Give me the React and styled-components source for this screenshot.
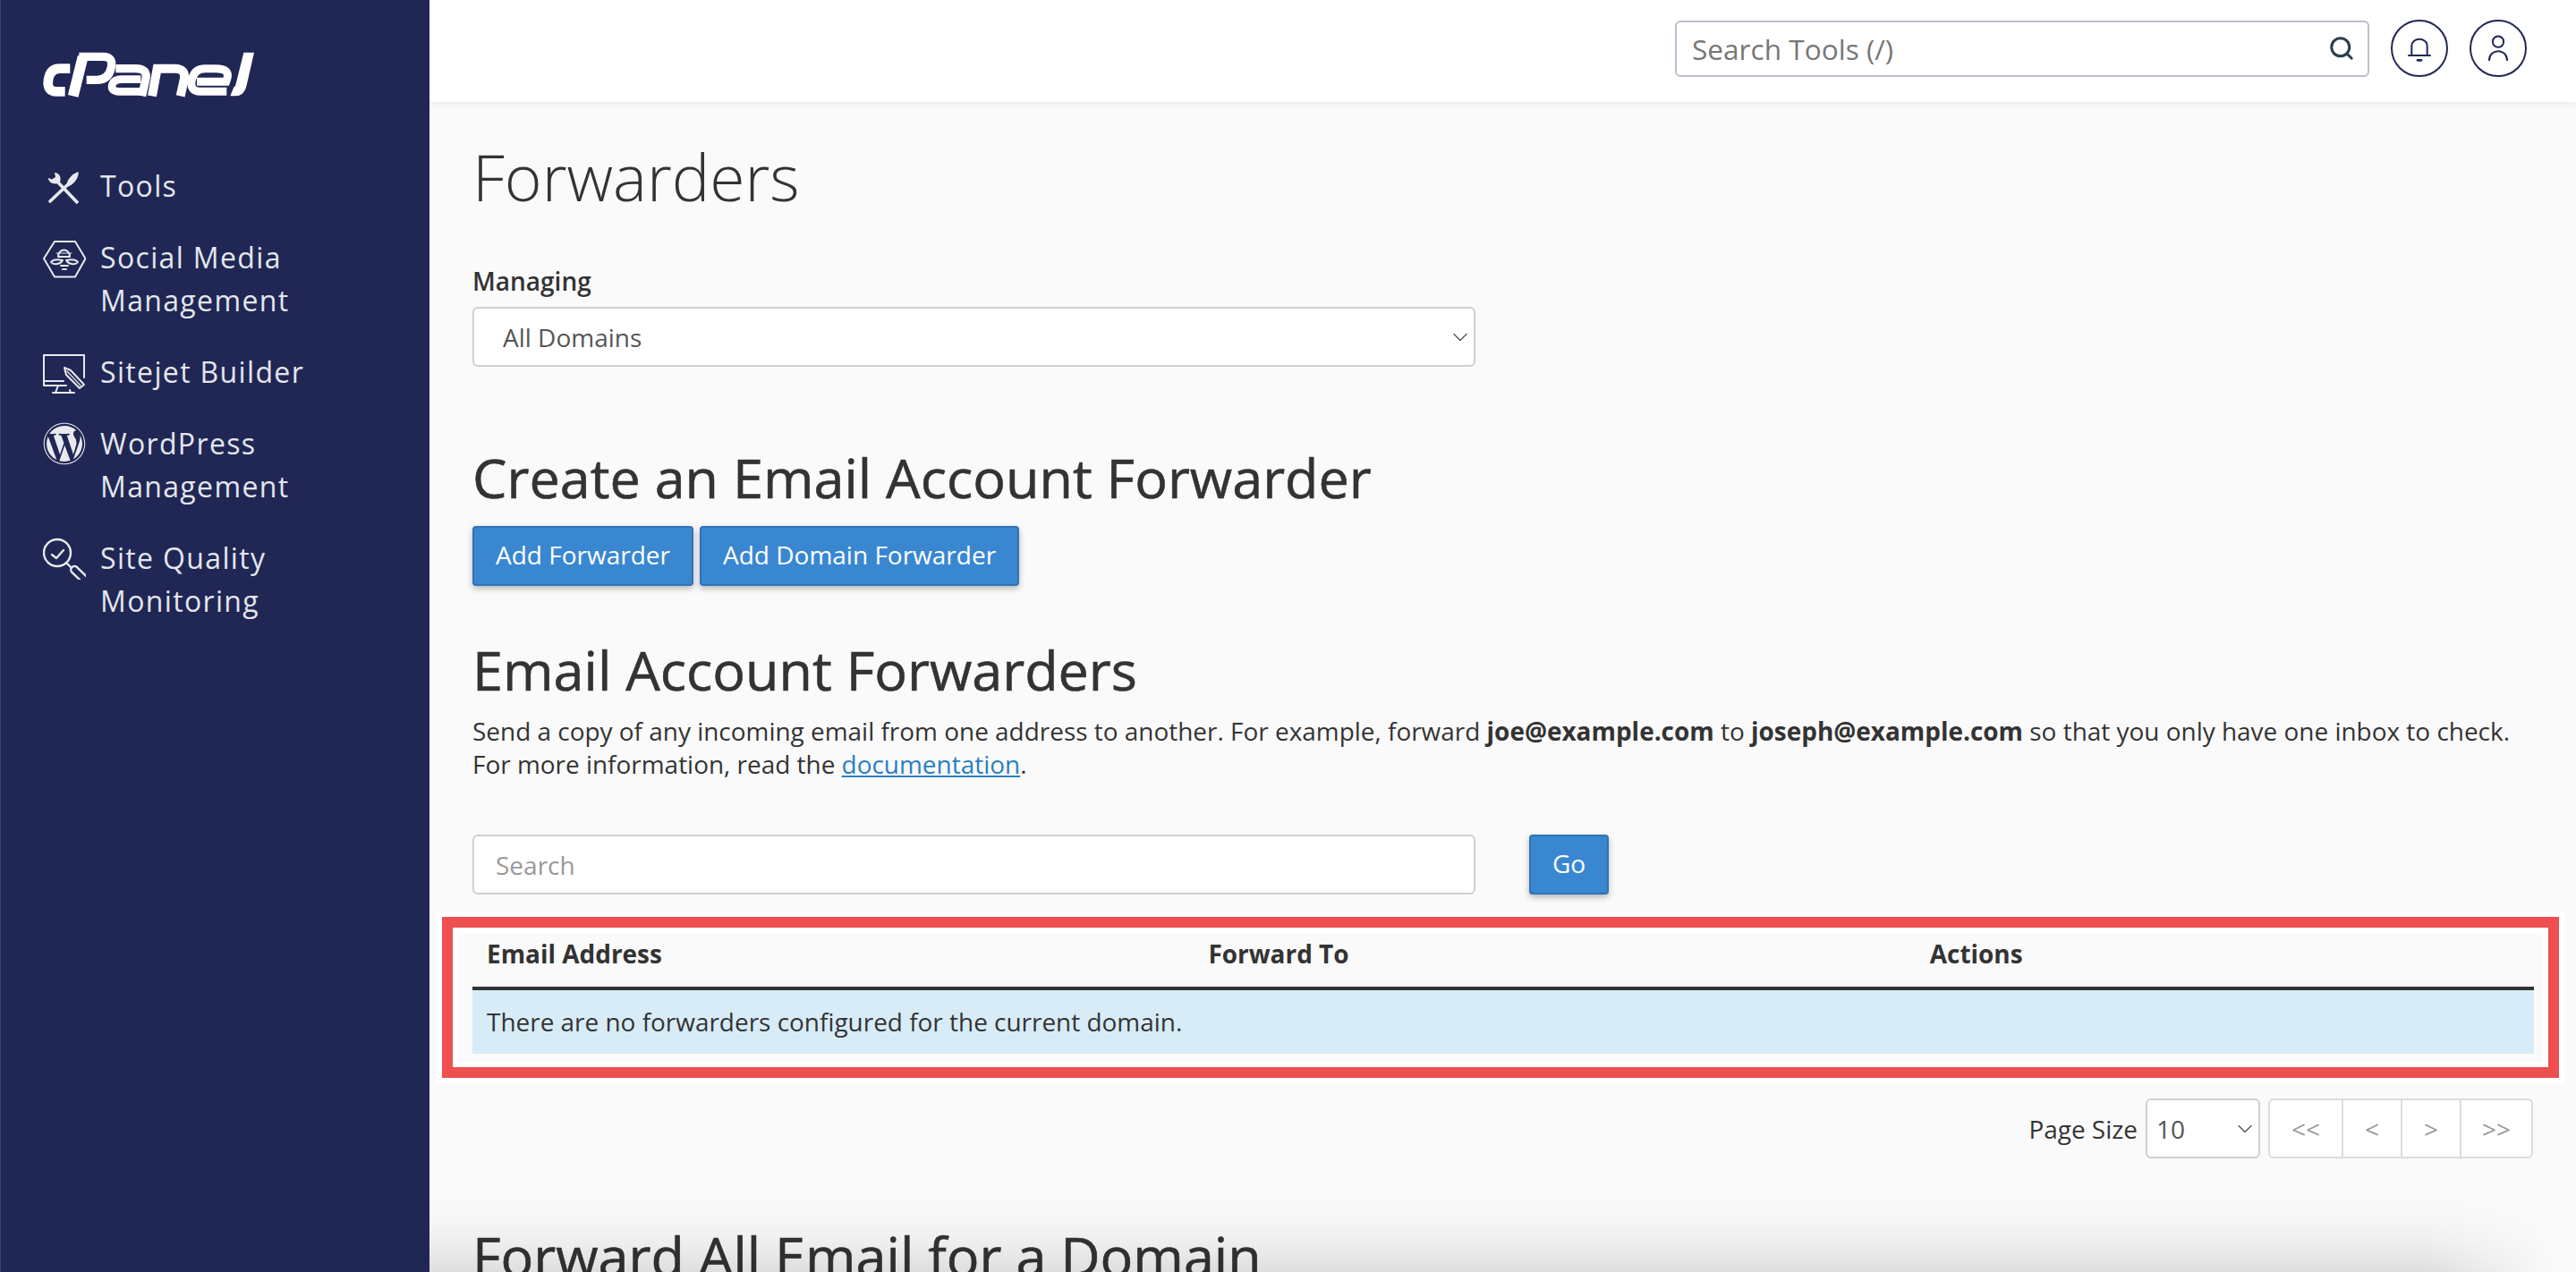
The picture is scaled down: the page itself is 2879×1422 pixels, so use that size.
import styled, { createGlobalStyle } from "styled-components"
import { Search as SearchGlyph, ChevronDown } from "lucide-react"
import { FaWordpress } from "react-icons/fa"

const FONT = `"Open Sans", "Noto Sans", sans-serif`

const GlobalStyle = createGlobalStyle`
  * { box-sizing: border-box; }
  html, body { margin: 0; height: 100%; overflow: hidden; }
  body { font-family: ${FONT}; font-size: 27.95px; color: #333; background: #fafafa; }
`

const CpanelLogo = () => (
  <LogoSvg viewBox="0 0 750 195" aria-label="cPanel logo">
    <g fill="none" stroke="#fff" strokeWidth="27">
      <path d="M115 80H80Q48 80 42 118Q36 157 70 157H98" strokeWidth="32" />
      <path d="M125 172L158 40" strokeWidth="36" />
      <path d="M145 40H225Q262 40 252 80Q243 118 205 118H170" strokeWidth="28" />
      <path d="M268 80H335Q378 80 368 118L356 172" strokeWidth="28" />
      <path d="M352 157H280Q250 157 256 134Q262 116 288 116H352" strokeWidth="26" />
      <path d="M390 172L407 80H465Q505 80 497 118L485 172" strokeWidth="30" />
      <path d="M640 157H552Q515 157 523 118Q531 80 568 80H605Q650 80 642 112L638 124H540" strokeWidth="27" />
      <path d="M697 26H732L706 140Q698 172 668 172H652L664 142Q668 142 670 135Z" fill="#fff" stroke="none" />
    </g>
  </LogoSvg>
)

const ToolsIcon = () => (
  <NavSvg viewBox="0 0 48 48">
    <path d="M13 9C18 9 21 14 19 20C14 23 6 21 6 15L10 16.5L14 14Z" fill="#e8e9ee" stroke="none" />
    <path d="M16 19L39 43" strokeWidth="3.6" strokeLinecap="butt" />
    <path d="M8 41L27 23" strokeWidth="3.6" />
    <path d="M27 24C27 18 33 11 39 9C39 15 33 23 27 24Z" fill="#e8e9ee" strokeWidth="1.5" />
  </NavSvg>
)

const SocialIcon = () => (
  <NavSvg viewBox="0 0 48 48" $weight={2}>
    <path d="M1 25L13 6H36L47.5 25L36 45.5H13Z" />
    <path d="M17 23C17 13 30 13 30 23Z" />
    <path d="M15 19H32" strokeWidth="1" />
    <path d="M9 29C12 25 18 26 22 27C20 31 12 33 9 29Z" />
    <path d="M39 29C36 25 30 26 26 27C28 31 36 33 39 29Z" />
    <path d="M20 33H28M22 37H26" />
  </NavSvg>
)

const SitejetIcon = () => (
  <NavSvg viewBox="0 0 48 48" $weight={2}>
    <path d="M46 30V5H1V39H26" />
    <path d="M1 34H23M17 39L14 47M30 44L31 47M11 47H35" />
    <path d="M24 19L31 22L46 38L41 42L26 27Z" strokeWidth="2" />
    <path d="M27 23L42 39" strokeWidth="1.2" />
  </NavSvg>
)

const QualityIcon = () => (
  <NavSvg viewBox="0 0 48 48" $weight={2.4}>
    <circle cx="16" cy="18" r="15" />
    <path d="M10 20L15 24L23 15" />
    <path d="M27 30L31 34" />
    <rect x="29" y="37" width="22" height="8" rx="4" transform="rotate(44 31 37) translate(1 -7)" />
  </NavSvg>
)

const BellIcon = () => (
  <TopSvg viewBox="0 0 24 24">
    <path d="M5.5 17.5V10C5.5 2.5 18.5 2.5 18.5 10V17.5" />
    <path d="M3 18H21" />
    <path d="M10.5 22H13.5" strokeWidth="2" />
  </TopSvg>
)

const UserIcon = () => (
  <TopSvg viewBox="0 0 24 24">
    <circle cx="12" cy="6.5" r="4.6" />
    <path d="M4.5 22C4.5 12 19.5 12 19.5 22" />
  </TopSvg>
)

const NAV_ITEMS = [
  { label: "Tools", icon: <ToolsIcon /> },
  { label: "Social Media Management", icon: <SocialIcon /> },
  { label: "Sitejet Builder", icon: <SitejetIcon /> },
  { label: "WordPress Management", icon: <WpIcon /> },
  { label: "Site Quality Monitoring", icon: <QualityIcon /> },
]

function WpIcon() {
  return <FaWordpress size={48} color="#e8e9ee" />
}

export default function App() {
  return (
    <Page>
      <GlobalStyle />
      <Sidebar>
        <CpanelLogo />
        <Nav>
          {NAV_ITEMS.map((item) => (
            <NavItem key={item.label}>
              <IconSlot>{item.icon}</IconSlot>
              <NavLabel>{item.label}</NavLabel>
            </NavItem>
          ))}
        </Nav>
      </Sidebar>

      <Main>
        <TopBar>
          <ToolSearch>
            <ToolInput placeholder="Search Tools (/)" />
            <SearchGlyph size={30} color="#2b3f4e" strokeWidth={2.4} />
          </ToolSearch>
          <RoundButton><BellIcon /></RoundButton>
          <RoundButton><UserIcon /></RoundButton>
        </TopBar>

        <Content>
          <Title>Forwarders</Title>

          <FieldLabel>Managing</FieldLabel>
          <SelectWrap $width="1121px">
            <Select defaultValue="all">
              <option value="all">All Domains</option>
            </Select>
            <SelectChevron size={28} strokeWidth={1.2} />
          </SelectWrap>

          <SectionTitle $top="88px">Create an Email Account Forwarder</SectionTitle>
          <ButtonRow>
            <Button>Add Forwarder</Button>
            <Button>Add Domain Forwarder</Button>
          </ButtonRow>

          <SectionTitle $top="58px">Email Account Forwarders</SectionTitle>
          <Intro>
            Send a copy of any incoming email from one address to another. For example, forward{" "}
            <b>joe@example.com</b> to <b>joseph@example.com</b> so that you only have one inbox to check.
            <br />
            For more information, read the <DocLink href="#">documentation</DocLink>.
          </Intro>

          <SearchRow>
            <SearchInput placeholder="Search" />
            <Button>Go</Button>
          </SearchRow>

          <TableArea>
            <Table>
              <colgroup>
                <col width="35%" />
                <col width="35%" />
                <col width="30%" />
              </colgroup>
              <thead>
                <tr>
                  <Th>Email Address</Th>
                  <Th>Forward To</Th>
                  <Th>Actions</Th>
                </tr>
              </thead>
              <tbody>
                <tr>
                  <Td colSpan={3}>There are no forwarders configured for the current domain.</Td>
                </tr>
              </tbody>
            </Table>
            <Highlight />
          </TableArea>

          <PagerRow>
            <PageSizeLabel>Page Size</PageSizeLabel>
            <SelectWrap $width="128px">
              <Select $compact defaultValue="10">
                <option value="10">10</option>
              </Select>
              <SelectChevron size={28} strokeWidth={1.2} />
            </SelectWrap>
            <Pager>
              <PageCell $width="80px">&lt;&lt;</PageCell>
              <PageCell $width="66px">&lt;</PageCell>
              <PageCell $width="66px">&gt;</PageCell>
              <PageCell $width="80px">&gt;&gt;</PageCell>
            </Pager>
          </PagerRow>

          <SectionTitle $top="73px">Forward All Email for a Domain</SectionTitle>
        </Content>
        <BottomFade />
      </Main>
    </Page>
  )
}

const Page = styled.div`
  display: flex;
  width: 100%;
  height: 100vh;
  overflow: hidden;
`

const Sidebar = styled.aside`
  flex: 0 0 480px;
  padding: 58px 0 0 47px;
  background: #202755;
  border-left: 1px solid #3a4170;
`

const LogoSvg = styled.svg`
  display: block;
  width: 250px;
  height: 65px;
  margin: -8px 0 0 -8px;
`

const Nav = styled.nav`
  display: flex;
  flex-direction: column;
  gap: 32px;
  margin-top: 69px;
`

const NavItem = styled.div`
  display: flex;
  gap: 16px;
  width: 380px;
`

const IconSlot = styled.div`
  flex: 0 0 48px;
  height: 48px;
`

const NavSvg = styled.svg`
  display: block;
  width: 48px;
  height: 48px;
  fill: none;
  stroke: #e8e9ee;
  stroke-width: ${(p) => p.$weight || 3};
  stroke-linecap: round;
  stroke-linejoin: round;
`

const NavLabel = styled.span`
  width: 280px;
  color: #e4e6ec;
  font-size: 32px;
  line-height: 48px;
  letter-spacing: 1.35px;
`

const Main = styled.main`
  position: relative;
  flex: 1;
  min-width: 0;
  height: 100%;
  overflow: hidden;
`

const TopBar = styled.header`
  display: flex;
  align-items: center;
  justify-content: flex-end;
  gap: 24px;
  height: 114px;
  padding: 0 55px 6px 0;
  background: #fff;
  box-shadow: 0 2px 8px rgba(0, 0, 0, 0.08);
`

const ToolSearch = styled.div`
  display: flex;
  align-items: center;
  width: 776px;
  height: 63px;
  padding: 0 14px 0 17px;
  background: #fff;
  border: 2px solid #bdbdcf;
  border-radius: 6px;
`

const ToolInput = styled.input`
  flex: 1;
  min-width: 0;
  border: 0;
  outline: 0;
  padding: 0;
  background: transparent;
  font-family: ${FONT};
  font-size: 31.6px;

  &::placeholder {
    color: #777;
    opacity: 1;
  }
`

const RoundButton = styled.div`
  display: flex;
  align-items: center;
  justify-content: center;
  width: 64px;
  height: 64px;
  border: 2px solid #202755;
  border-radius: 50%;
`

const TopSvg = styled.svg`
  width: 32px;
  height: 32px;
  fill: none;
  stroke: #202755;
  stroke-width: 1.5;
  stroke-linecap: round;
`

const Content = styled.div`
  padding: 0 47px 0 48px;
`

const Title = styled.h1`
  margin: 44px 0 0;
  color: #333;
  font-size: 71.4px;
  font-weight: 300;
  line-height: 80px;
`

const FieldLabel = styled.label`
  display: block;
  margin: 57px 0 10px;
  font-size: 28px;
  font-weight: 600;
  line-height: 38px;
`

const SelectWrap = styled.div`
  position: relative;
  width: ${(p) => p.$width};
  height: 67px;
`

const Select = styled.select`
  display: block;
  width: 100%;
  height: 100%;
  padding: 0 ${(p) => (p.$compact ? "10px" : "32px")};
  appearance: none;
  background: #fff;
  border: 2px solid #cfcfcf;
  border-radius: 6px;
  color: #555;
  font-family: ${FONT};
  font-size: 28px;
`

const SelectChevron = styled(ChevronDown)`
  position: absolute;
  top: 20px;
  right: 3px;
  color: #555;
  pointer-events: none;
`

const SectionTitle = styled.h2`
  margin: ${(p) => p.$top} 0 0;
  color: #333;
  font-size: 61.1px;
  font-weight: 500;
  line-height: 72px;
  -webkit-text-stroke: 0.6px #333;
`

const ButtonRow = styled.div`
  display: flex;
  gap: 7px;
  margin-top: 18px;
`

const Button = styled.button`
  height: 67px;
  padding: 0 24px 3px;
  background: #3a87d1;
  border: 2px solid #2f74b8;
  border-radius: 4px;
  box-shadow: 0 3px 7px rgba(0, 0, 0, 0.28);
  color: #fff;
  font-family: ${FONT};
  font-size: 28px;
`

const Intro = styled.p`
  margin: 14px 0 0;
  line-height: 37px;

  b {
    font-weight: 700;
  }
`

const DocLink = styled.a`
  color: #2a7ec5;
  text-decoration: underline;
`

const SearchRow = styled.div`
  display: flex;
  gap: 60px;
  margin-top: 60px;
`

const SearchInput = styled.input`
  width: 1121px;
  height: 67px;
  padding: 0 24px;
  background: #fff;
  border: 2px solid #cfcfcf;
  border-radius: 6px;
  outline: 0;
  font-family: ${FONT};
  font-size: 28px;

  &::placeholder {
    color: #999;
    opacity: 1;
  }
`

const TableArea = styled.div`
  position: relative;
  margin-top: 29px;
`

const Table = styled.table`
  width: 100%;
  table-layout: fixed;
  border-collapse: collapse;
`

const Th = styled.th`
  height: 76px;
  padding: 1px 16px 0;
  border-bottom: 4px solid #333;
  font-weight: 700;
  line-height: 37px;
  text-align: left;
`

const Td = styled.td`
  height: 73px;
  padding: 0 16px 2px;
  background: #d7ecf7;
`

const Highlight = styled.div`
  position: absolute;
  inset: -4px -28px -27px -34px;
  border: 12px solid #ee4f4f;
  box-shadow: 0 0 0 6px #fff, inset 0 0 0 6px #fff;
  pointer-events: none;
`

const PagerRow = styled.div`
  display: flex;
  align-items: center;
  justify-content: flex-end;
  margin-top: 50px;
  padding-right: 1px;
`

const PageSizeLabel = styled.span`
  margin-right: 9px;
`

const Pager = styled.div`
  display: flex;
  height: 67px;
  margin-left: 9px;
  background: #fff;
  border: 2px solid #dcdcdc;
  border-radius: 6px;
`

const PageCell = styled.div`
  display: flex;
  align-items: center;
  justify-content: center;
  width: ${(p) => p.$width};
  color: #999;

  & + & {
    border-left: 2px solid #dcdcdc;
  }
`

const BottomFade = styled.div`
  position: absolute;
  right: 0;
  bottom: 0;
  left: 0;
  height: 90px;
  background: linear-gradient(
    to bottom,
    transparent,
    rgba(0, 0, 0, 0.012) 30%,
    rgba(0, 0, 0, 0.045) 62%,
    rgba(0, 0, 0, 0.11)
  );
  mask-image: linear-gradient(to right, #000 93%, transparent 99%);
  pointer-events: none;
`
